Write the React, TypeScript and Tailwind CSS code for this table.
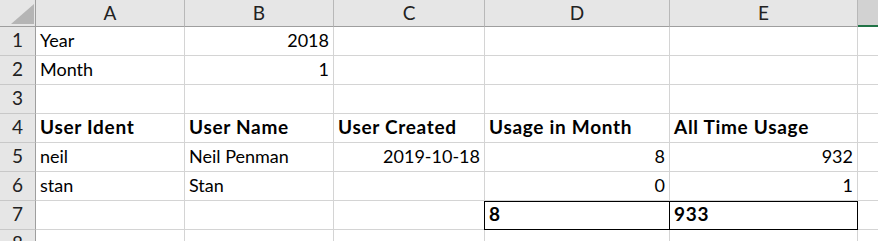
import React from "react";

type Cell = { v?: string; align?: "left" | "right"; bold?: boolean; boxed?: boolean };

const cols = ["A", "B", "C", "D", "E"];

// sheet contents, one array per row (columns A..E)
const rows: Cell[][] = [
  [{ v: "Year" }, { v: "2018", align: "right" }, {}, {}, {}],
  [{ v: "Month" }, { v: "1", align: "right" }, {}, {}, {}],
  [{}, {}, {}, {}, {}],
  [
    { v: "User Ident", bold: true },
    { v: "User Name", bold: true },
    { v: "User Created", bold: true },
    { v: "Usage in Month", bold: true },
    { v: "All Time Usage", bold: true },
  ],
  [
    { v: "neil" },
    { v: "Neil Penman" },
    { v: "2019-10-18", align: "right" },
    { v: "8", align: "right" },
    { v: "932", align: "right" },
  ],
  [{ v: "stan" }, { v: "Stan" }, {}, { v: "0", align: "right" }, { v: "1", align: "right" }],
  [{}, {}, {}, { v: "8", bold: true, boxed: true }, { v: "933", bold: true, boxed: true }],
  [{}, {}, {}, {}, {}],
];

function CornerCell() {
  return (
    <div className="relative h-[27px] bg-[#e6e6e6] border-r border-b border-[#9e9e9e]">
      <svg className="absolute left-[11px] top-[4px]" width="23" height="20" viewBox="0 0 23 20">
        <polygon points="23,0 23,20 0,20" fill="#b5b5b5" />
      </svg>
    </div>
  );
}

function DataCell({ cell, col }: { cell: Cell; col: number }) {
  const boxedLeft = cell.boxed && col === 3;
  return (
    <div
      className={[
        "h-[29px] flex items-end pb-[4px] px-[4px] whitespace-nowrap overflow-visible leading-[22px] text-black",
        cell.align === "right" ? "justify-end" : "justify-start",
        cell.bold ? "font-bold text-[19px] tracking-[0.7px]" : "text-[18px]",
        cell.boxed
          ? "border-t border-b border-r border-t-black border-b-black border-r-black"
          : "border-r border-b border-[#d4d4d4]",
        boxedLeft ? "border-l border-l-black -ml-px" : "",
      ].join(" ")}
    >
      {cell.v}
    </div>
  );
}

export default function App() {
  return (
    <div className="w-[878px] h-[241px] overflow-hidden bg-white font-['Lato',sans-serif]">
      <div className="grid grid-cols-[36px_149px_149px_151px_185px_188px_20px] grid-rows-[27px_repeat(8,29px)]">
        <CornerCell />
        {cols.map((c) => (
          <div
            key={c}
            className="h-[27px] flex items-center justify-center bg-[#e6e6e6] border-r border-r-[#b8b8b8] border-b border-b-[#9e9e9e] text-[19px] text-[#222]"
          >
            {c}
          </div>
        ))}
        <div className="h-[27px] bg-[#d2d2d2] border-b-2 border-b-[#217346]" />

        {rows.map((row, r) => (
          <React.Fragment key={r}>
            <div className="h-[29px] flex items-end justify-center pb-[4px] bg-[#e6e6e6] border-r border-r-[#9e9e9e] border-b border-b-[#c8c8c8] text-[19px] leading-[22px] text-[#222]">
              {r + 1}
            </div>
            {row.map((cell, c) => (
              <DataCell key={c} cell={cell} col={c} />
            ))}
            <div className="h-[29px] border-b border-[#d4d4d4]" />
          </React.Fragment>
        ))}
      </div>
    </div>
  );
}
